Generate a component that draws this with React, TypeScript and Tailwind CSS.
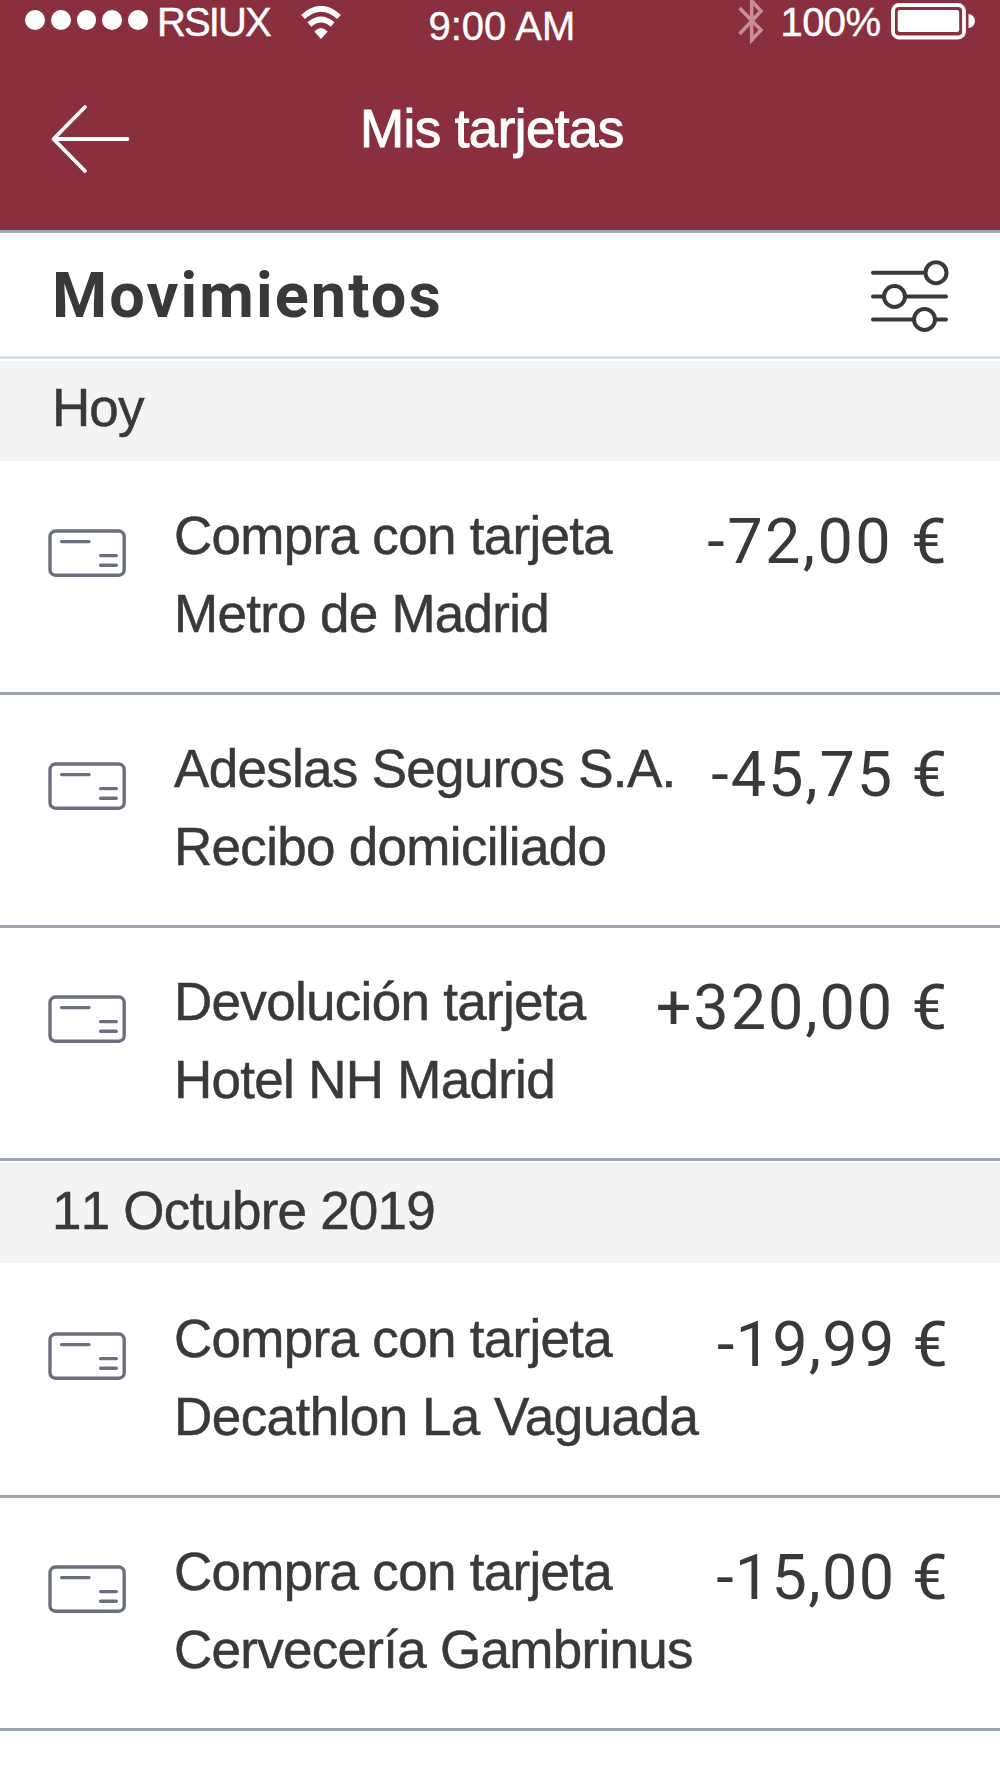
import React from "react";

type Movement = { title: string; detail: string; amount: string; detailClass: string; amountClass: string };

const today: Movement[] = [
  { title: "Compra con tarjeta", detail: "Metro de Madrid", amount: "-72,00 €", detailClass: "tracking-[-0.72px]", amountClass: "tracking-[2.4px]" },
  { title: "Adeslas Seguros S.A.", detail: "Recibo domiciliado", amount: "-45,75 €", detailClass: "tracking-[-0.7px]", amountClass: "tracking-[1.9px]" },
  { title: "Devolución tarjeta", detail: "Hotel NH Madrid", amount: "+320,00 €", detailClass: "tracking-[-0.72px]", amountClass: "tracking-[1.9px]" },
];

const october: Movement[] = [
  { title: "Compra con tarjeta", detail: "Decathlon La Vaguada", amount: "-19,99 €", detailClass: "tracking-[-0.55px]", amountClass: "tracking-[1.2px]" },
  { title: "Compra con tarjeta", detail: "Cervecería Gambrinus", amount: "-15,00 €", detailClass: "tracking-[-0.72px]", amountClass: "tracking-[1.3px]" },
];

function CardIcon() {
  return (
    <svg width="78" height="48" viewBox="0 0 78 48" fill="none" stroke="#6a6f7b" strokeWidth="3.4" strokeLinecap="round" className="mt-[67px] ml-12 shrink-0">
      <rect x="2" y="2" width="74.2" height="44.2" rx="5.5" />
      <path d="M13.6 12.6H41M52.6 26.6H68.3M52.6 36.3H68.3" />
    </svg>
  );
}

function Row({ m }: { m: Movement }) {
  return (
    <li className="flex h-[233px] items-start border-b-[3px] border-[#9da5b3]">
      <CardIcon />
      <div className="ml-[48px] mt-[35px] flex-1 whitespace-nowrap text-[53px] leading-[78px] [-webkit-text-stroke:0.5px_#393939]">
        <p className="tracking-[-0.7px]">{m.title}</p>
        <p className={m.detailClass}>{m.detail}</p>
      </div>
      <p className={"mr-[51px] mt-[40px] whitespace-nowrap font-['Roboto',sans-serif] text-[63px] leading-[80px] " + m.amountClass}>{m.amount}</p>
    </li>
  );
}

function DateBar({ children, className }: { children: React.ReactNode; className: string }) {
  return <h2 className={"h-[100px] bg-[#f3f4f6] text-[53px] [-webkit-text-stroke:0.5px_#393939] " + className}>{children}</h2>;
}

export default function App() {
  return (
    <main className="h-[1778px] w-[1000px] overflow-hidden bg-white font-['Liberation_Sans',sans-serif] text-[#393939]">
      <header className="h-[233px] border-b-[3px] border-[#a0a8b7] bg-[#8a2f3d] text-white">
        <div className="flex h-12 items-start whitespace-nowrap">
          <div className="ml-[25px] mt-[10px] flex gap-[6px]">
            {[0, 1, 2, 3, 4].map((i) => (
              <span key={i} className="size-[19.8px] rounded-full bg-white" />
            ))}
          </div>
          <span className="ml-[9px] mt-[-1px] w-[115px] text-[40px] leading-[46px] tracking-[-1.9px] [-webkit-text-stroke:0.4px_white]">RSIUX</span>
          <svg width="40" height="34" viewBox="0 0 40 34" className="ml-[29.500px] mt-[6px]" fill="none" stroke="white">
            <path d="M2 11Q20 -5.500 38 11" strokeWidth="5.6" />
            <path d="M8.300 18.500Q20 8.500 31.700 18.500" strokeWidth="5.6" />
            <path d="M13.300 25.500Q20 18.500 26.700 25.500L20 33Z" fill="white" stroke="none" />
          </svg>
          <span className="ml-[87px] mt-[3px] w-[150px] text-[40px] leading-[46px] [-webkit-text-stroke:0.4px_white]">9:00 AM</span>
          <svg width="27" height="48" viewBox="0 0 27 48" className="ml-[160px] mt-[-2px]" fill="none" stroke="#c58e98" strokeWidth="3.6">
            <path d="M1.500 10L23 32L13.700 42V3L23 13L1.500 36" />
          </svg>
          <span className="ml-[15px] mt-[-1px] w-[100px] text-[40px] leading-[46px] tracking-[-0.6px] [-webkit-text-stroke:0.4px_white]">100%</span>
          <svg width="85" height="37" viewBox="0 0 85 37" className="ml-[11px] mt-[3px]">
            <rect x="2" y="2" width="71" height="32.500" rx="6" fill="none" stroke="white" strokeWidth="3.800" />
            <rect x="6.700" y="7" width="61.500" height="22" rx="2.500" fill="white" />
            <path d="M77.500 11C86 12 86 24 77.500 25Z" fill="white" />
          </svg>
        </div>
        <div className="flex">
          <svg width="80" height="70" viewBox="0 0 80 70" className="ml-[50px] mt-[56px]" fill="none" stroke="white" strokeWidth="3.800" strokeLinecap="round" strokeLinejoin="round">
            <path d="M77.500 35H4M35 3L3.500 35L35 67" />
          </svg>
          <h1 className="ml-[230px] mt-[51px] text-[53px] leading-[60px] tracking-[-0.6px] [-webkit-text-stroke:1px_white]">Mis tarjetas</h1>
        </div>
      </header>
      <section className="mb-[2px] flex h-[126px] justify-between border-b-[3px] border-[#dae0e6]">
        <h2 className="ml-[52px] mt-[25px] font-['Roboto',sans-serif] text-[63px] font-bold leading-[76px] tracking-[2.1px]">Movimientos</h2>
        <svg width="80" height="74" viewBox="0 0 80 74" className="mr-[50px] mt-[26px]" fill="none" stroke="#393939" strokeWidth="4" strokeLinecap="round">
          <path d="M3 13.700H55M3 37.500H14M35 37.500H76M3 60.500H44M65 60.500H76" />
          <circle cx="66" cy="13.700" r="10.500" />
          <circle cx="24.500" cy="37.500" r="10.500" />
          <circle cx="54.500" cy="60.500" r="10.500" />
        </svg>
      </section>
      <DateBar className="pl-[52px] leading-[94px] tracking-[-0.9px]">Hoy</DateBar>
      <ul className="pt-px">{today.map((m, i) => <Row key={i} m={m} />)}</ul>
      <DateBar className="mt-[2px] pl-[52px] leading-[95px] tracking-[-0.8px] [font-kerning:none]">11 Octubre 2019</DateBar>
      <ul className="pt-[2px]">{october.map((m, i) => <Row key={i} m={m} />)}</ul>
    </main>
  );
}
